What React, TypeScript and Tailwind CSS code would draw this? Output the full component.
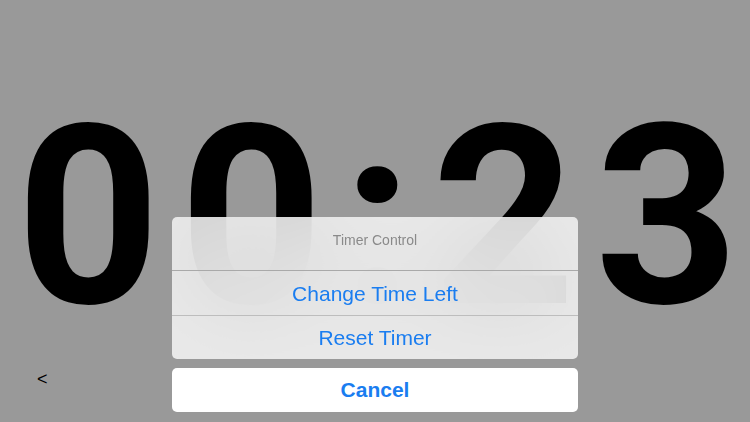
import React from "react";

const ActionSheet: React.FC = () => {
  return (
    <div className="absolute left-[172px] top-[217px] w-[406px] flex flex-col gap-[9px] font-['Liberation_Sans',Arial,sans-serif]">
      <div className="rounded-[5px] overflow-hidden bg-[#f7f7f7]/85 backdrop-blur-2xl flex flex-col">
        <div className="h-[54px] flex items-center justify-center pb-[7px] text-[14px] text-[#8a8a8a] border-b border-[#a9a9a9]">
          Timer Control
        </div>
        <button className="h-[45px] flex items-center justify-center pt-[1px] text-[21px] text-[#1a7df0] border-b border-[#bdbdbd]">
          Change Time Left
        </button>
        <button className="h-[43px] flex items-center justify-center text-[21px] text-[#1a7df0]">
          Reset Timer
        </button>
      </div>
      <button className="h-[44px] rounded-[5px] bg-white flex items-center justify-center text-[21px] font-bold text-[#1a7df0]">
        Cancel
      </button>
    </div>
  );
};

export default function App() {
  return (
    <div className="relative w-[750px] h-[422px] overflow-hidden bg-[#999999]">
      <div className="flex justify-center pt-[92px] pl-[24px]">
        <span className="text-[251px] leading-none font-bold text-black font-['Roboto',sans-serif] tracking-[19px]">
          00:23
        </span>
      </div>
      <span className="absolute left-[37px] top-[366px] text-[18px] text-black font-['Liberation_Sans',Arial,sans-serif]">
        &lt;
      </span>
      <ActionSheet />
    </div>
  );
}
